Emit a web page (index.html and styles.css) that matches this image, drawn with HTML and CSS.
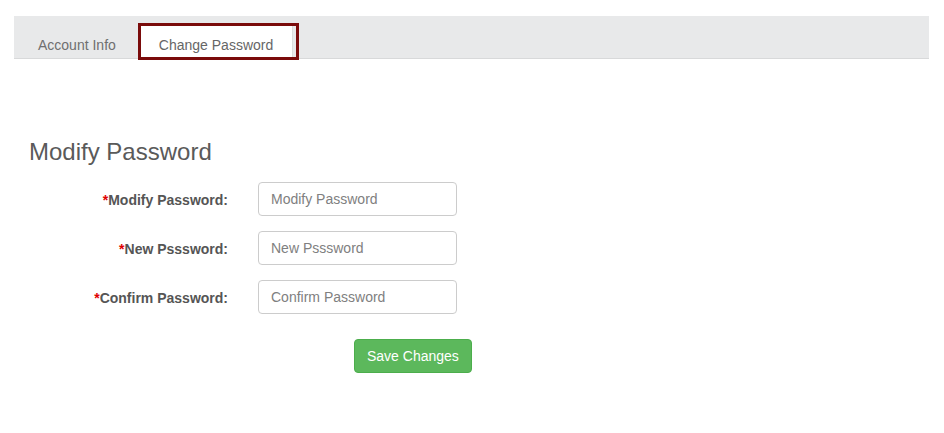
FILE: index.html
```html
<!DOCTYPE html>
<html>
<head>
<meta charset="utf-8">
<link rel="stylesheet" href="styles.css">
</head>
<body>
<div class="page">
  <div class="tabbar">
    <ul class="tabs">
      <li class="tab"><a class="tab-link">Account Info</a></li>
      <li class="tab tab-highlight"><a class="tab-link tab-active">Change Password</a></li>
    </ul>
  </div>
  <h3 class="title">Modify Password</h3>
  <form class="form">
    <div class="row">
      <label class="label"><span class="req">*</span>Modify Password:</label>
      <input class="input" type="password" placeholder="Modify Password">
    </div>
    <div class="row">
      <label class="label"><span class="req">*</span>New Psssword:</label>
      <input class="input" type="password" placeholder="New Psssword">
    </div>
    <div class="row">
      <label class="label"><span class="req">*</span>Confirm Password:</label>
      <input class="input" type="password" placeholder="Confirm Password">
    </div>
    <div class="actions">
      <button class="btn" type="button">Save Changes</button>
    </div>
  </form>
</div>
</body>
</html>
```

FILE: styles.css
```css
* { box-sizing: border-box; }
html, body { margin: 0; padding: 0; background: #fff; }
body {
  font-family: "Liberation Sans", Arial, Helvetica, sans-serif;
  font-size: 14px;
  line-height: 20px;
  color: #555;
}
.page {
  padding: 16px 15px 0 14px;
}
.tabbar {
  height: 43px;
  background: #e8e9ea;
  border-bottom: 1px solid #d8d9da;
}
.tabs {
  list-style: none;
  margin: 0;
  padding: 7px 0 0 9px;
  display: flex;
  align-items: flex-start;
}
.tab { margin-right: 7px; }
.tab-link {
  display: block;
  padding: 12px 15px 0;
  line-height: 20px;
  color: #6f6f6f;
}
.tab-highlight {
  border: 3px solid #7a0b0b;
  padding-right: 3px;
  margin-right: 0;
}
.tab-active {
  background: #fff;
  padding: 9px 19px 2px 18px;
  border-right: 1px solid #dcdcdc;
  color: #666;
  height: 31px;
}
.title {
  margin: 80px 0 0 15px;
  font-size: 24px;
  font-weight: 400;
  line-height: 26px;
  color: #5a5a5a;
}
.form {
  margin-top: 17px;
}
.row {
  display: grid;
  grid-template-columns: 214px 200px;
  column-gap: 30px;
  margin-bottom: 15px;
}
.label {
  text-align: right;
  font-weight: 700;
  font-size: 14px;
  padding-top: 7px;
  line-height: 22px;
  color: #555;
}
.req { color: #e00000; }
.input {
  height: 34px;
  width: 199px;
  padding: 6px 12px;
  border: 1px solid #ccc;
  border-radius: 4px;
  font-family: inherit;
  font-size: 14px;
  color: #555;
  background: #fff;
}
.input::placeholder { color: #808080; }
.actions {
  padding-left: 340px;
  padding-top: 10px;
}
.btn {
  height: 34px;
  padding: 6px 12px;
  border: 1px solid #4cae4c;
  border-radius: 4px;
  background: #5cb85c;
  color: #fff;
  font-family: inherit;
  font-size: 14px;
  line-height: 20px;
}
```
